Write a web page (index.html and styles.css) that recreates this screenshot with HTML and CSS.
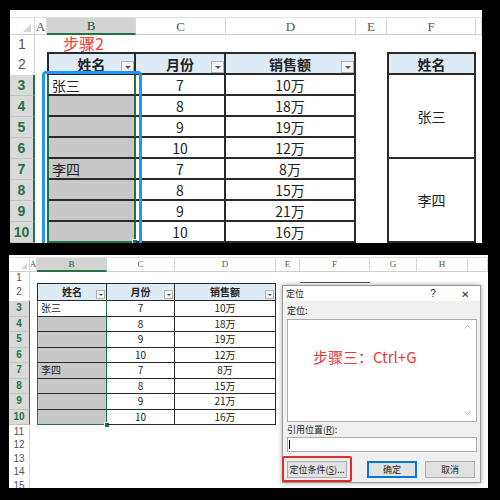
FILE: index.html
```html
<!DOCTYPE html>
<html lang="zh-CN">
<head>
<meta charset="utf-8">
<title>定位</title>
<link rel="stylesheet" href="styles.css">
</head>
<body>
<div class="page">
  <section class="panel top">
    <div class="grid">
      <div class="strip"></div>
      <div class="corner"><i class="tri"></i></div>
      <div class="ch">A</div><div class="ch on">B</div><div class="ch">C</div><div class="ch">D</div><div class="ch">E</div><div class="ch">F</div><div class="ch"></div>

      <div class="rh">1</div><div></div><div class="step"><span>步骤2</span></div>

      <div class="rh">2</div><div></div>
      <div class="th first">姓名<i class="dd"></i></div>
      <div class="th">月份<i class="dd"></i></div>
      <div class="th">销售额<i class="dd"></i></div>
      <div></div>
      <div class="th first">姓名</div>

      <div class="rh on">3</div><div></div><div class="td name sel">张三</div><div class="td">7</div><div class="td">10万</div><div></div><div class="td merge first">张三</div>
      <div class="rh on">4</div><div></div><div class="td name sel gray"></div><div class="td">8</div><div class="td">18万</div>
      <div class="rh on">5</div><div></div><div class="td name sel gray"></div><div class="td">9</div><div class="td">19万</div>
      <div class="rh on">6</div><div></div><div class="td name sel gray"></div><div class="td">10</div><div class="td">12万</div>
      <div class="rh on">7</div><div></div><div class="td name sel gray">李四</div><div class="td">7</div><div class="td">8万</div><div></div><div class="td merge first">李四</div>
      <div class="rh on">8</div><div></div><div class="td name sel gray"></div><div class="td">8</div><div class="td">15万</div>
      <div class="rh on">9</div><div></div><div class="td name sel gray"></div><div class="td">9</div><div class="td">21万</div>
      <div class="rh on">10</div><div></div><div class="td name sel gray last"><i class="fh"></i></div><div class="td">10</div><div class="td">16万</div>
    </div>
    <div class="anno"></div>
  </section>

  <section class="panel bot">
    <div class="grid">
      <div class="strip"></div>
      <div class="corner"><i class="tri"></i></div>
      <div class="ch">A</div><div class="ch on">B</div><div class="ch">C</div><div class="ch">D</div><div class="ch">E</div><div class="ch">F</div><div class="ch">G</div><div class="ch">H</div><div class="ch"></div>

      <div class="rh">1</div><div></div><div></div><div></div><div></div><div></div><div class="mark"></div>

      <div class="rh">2</div><div></div>
      <div class="th first">姓名<i class="dd"></i></div>
      <div class="th">月份<i class="dd"></i></div>
      <div class="th">销售额<i class="dd"></i></div>

      <div class="rh on">3</div><div></div><div class="td name sel">张三</div><div class="td">7</div><div class="td">10万</div>
      <div class="rh on">4</div><div></div><div class="td name sel gray"></div><div class="td">8</div><div class="td">18万</div>
      <div class="rh on">5</div><div></div><div class="td name sel gray"></div><div class="td">9</div><div class="td">19万</div>
      <div class="rh on">6</div><div></div><div class="td name sel gray"></div><div class="td">10</div><div class="td">12万</div>
      <div class="rh on">7</div><div></div><div class="td name sel gray">李四</div><div class="td">7</div><div class="td">8万</div>
      <div class="rh on">8</div><div></div><div class="td name sel gray"></div><div class="td">8</div><div class="td">15万</div>
      <div class="rh on">9</div><div></div><div class="td name sel gray"></div><div class="td">9</div><div class="td">21万</div>
      <div class="rh on">10</div><div></div><div class="td name sel gray last"><i class="fh"></i></div><div class="td">10</div><div class="td">16万</div>
      <div class="rh">11</div>
      <div class="rh">12</div>
      <div class="rh">13</div>
      <div class="rh">14</div>
      <div class="rh">15</div>
    </div>

    <div class="dlg">
      <div class="dlg-title"><span>定位</span><span class="q">?</span><span class="x">✕</span></div>
      <div class="dlg-body">
        <div class="lbl first-lbl">定位:</div>
        <div class="list">
          <span class="red">步骤三：Ctrl+G</span>
          <svg class="up" width="7" height="4" viewBox="0 0 7 4"><path d="M0.5 3.5 L3.5 0.5 L6.5 3.5" fill="none" stroke="#b8b8b8" stroke-width="1"/></svg>
          <svg class="down" width="7" height="4" viewBox="0 0 7 4"><path d="M0.5 0.5 L3.5 3.5 L6.5 0.5" fill="none" stroke="#b8b8b8" stroke-width="1"/></svg>
        </div>
        <div class="lbl">引用位置(<u>R</u>):</div>
        <div class="input"><i class="caret"></i></div>
        <div class="btns">
          <div class="btn special">定位条件(<u>S</u>)...</div>
          <div class="btn ok">确定</div>
          <div class="btn">取消</div>
        </div>
      </div>
    </div>
  </section>
</div>
</body>
</html>
```

FILE: styles.css
```css
* { box-sizing: border-box; margin: 0; padding: 0; }
html, body { width: 500px; height: 500px; background: #000; overflow: hidden; }
body { font-family: "Noto Sans CJK SC", "Noto Sans", sans-serif; color: #222; }

.page { display: flex; flex-direction: column; padding-top: 10px; gap: 12px; }
.panel { position: relative; background: #fff; height: 233px; overflow: hidden; }
.top { margin-left: 10px; width: 472px; --b: 2px; }
.bot { margin-left: 9px; width: 479px; --b: 1px; }

.grid { display: grid; line-height: 1; }
.top .grid {
  grid-template-columns: 25px 12px 89px 90px 130px 31px 89px 6px;
  grid-template-rows: 8px 17px 17px 23px repeat(8, 21px);
}
.bot .grid {
  grid-template-columns: 21px 7px 70px 68px 101px 24px 70px 47px 51px 20px;
  grid-template-rows: 3px 14px 11px 18px repeat(8, 15.5px) repeat(5, 13.5px);
}

.strip { grid-column: 1 / -1; border-bottom: 1px solid #e2e2e2; }
.corner { grid-column: 1; position: relative; border-right: 1px solid #d6d6d6; border-bottom: 1px solid #cfcfcf; }
.tri { position: absolute; right: 3px; bottom: 2px; width: 0; height: 0; border-left: 8px solid transparent; border-bottom: 8px solid #d4d4d4; }
.bot .tri { right: 2px; border-left-width: 6px; border-bottom-width: 6px; }

.ch {
  display: flex; align-items: center; justify-content: center;
  font-family: "Liberation Serif", "DejaVu Serif", serif; color: #555;
  border-right: 1px solid #d6d6d6; border-bottom: 1px solid #cfcfcf;
}
.ch.on { background: #d3d3d3; color: #24583a; border-bottom: 2px solid #217346; }
.top .ch { font-size: 13px; }
.bot .ch { font-size: 9px; }

.rh {
  grid-column: 1; display: flex; align-items: center; justify-content: center;
  color: #555; border-right: 1px solid #d6d6d6;
}
.rh.on { background: #d9d9d9; color: #217346; font-weight: bold; border-right: 2px solid #217346; border-bottom: 1px solid #c2c2c2; }
.top .rh { font-size: 14px; font-family: "Liberation Sans", sans-serif; }
.bot .rh { font-size: 10px; font-family: "Liberation Sans", sans-serif; }
.bot .rh.on { border-right-width: 1px; }

.step { display: flex; align-items: center; padding-left: 16px; color: #e6453c; font-size: 16px; line-height: 1; white-space: nowrap; overflow: visible; }
.step span { display: block; height: 15px; line-height: 15px; }

.th {
  position: relative; display: flex; align-items: center; justify-content: center;
  background: #ddebf7; font-weight: bold;
  border-style: solid; border-color: #2a2a2a; border-width: var(--b) var(--b) var(--b) 0;
}
.td {
  position: relative; display: flex; align-items: center; justify-content: center;
  border-style: solid; border-color: #2a2a2a; border-width: 0 var(--b) var(--b) 0;
}
.first, .name { border-left-width: var(--b); }
.name { justify-content: flex-start; padding-left: 3px; }
.gray { background: #c8c8c8; }
.sel { border-left-color: #217346; border-right-color: #217346; }
.sel.last { border-bottom-color: #217346; }
.merge { grid-row: span 4; }
.top .th, .top .td { font-size: 14px; }
.bot .th, .bot .td { font-size: 10px; }

.dd { position: absolute; right: 0; bottom: 0; width: 13px; height: 12px; border: 1px solid #b3b3b3; background: #f6f6f6; }
.dd::after {
  content: ""; position: absolute; left: 50%; top: 50%; margin: -1px 0 0 -3px;
  border-left: 3px solid transparent; border-right: 3px solid transparent; border-top: 3px solid #555;
}
.bot .dd { right: 1px; bottom: 1px; width: 9px; height: 9px; }
.bot .dd::after { margin: -1px 0 0 -2px; border-left-width: 2px; border-right-width: 2px; border-top-width: 2px; }

.fh { position: absolute; right: -4px; bottom: -4px; width: 6px; height: 6px; background: #217346; border: 1px solid #fff; }
.mark { border-bottom: 1px solid #555; }

.anno { position: absolute; left: 32px; top: 61px; width: 100px; height: 200px; border: 3px solid #2196f3; border-radius: 4px; }

/* dialog */
.dlg {
  position: absolute; left: 273px; top: 30px; width: 199px; height: 198px;
  background: #f0f0f0; border: 1px solid #9a9a9a; box-shadow: 0 0 5px rgba(0,0,0,0.35);
  font-size: 9px; color: #222;
}
.dlg-title { height: 15px; background: #fff; display: flex; align-items: center; padding-left: 3px; }
.q { margin-left: auto; width: 14px; text-align: center; font-family: "Liberation Sans", sans-serif; font-size: 10px; }
.x { width: 14px; margin: 0 8px 0 18px; text-align: center; font-size: 10px; color: #333; }
.dlg-body { padding: 0 3px 0 4px; }
.lbl { height: 15px; display: flex; align-items: center; }
.first-lbl { height: 18px; }
.list { position: relative; height: 103px; background: #fff; border: 1px solid #acacac; padding: 27px 0 0 25px; }
.red { font-size: 15px; line-height: 20px; color: #e23b3b; white-space: nowrap; }
.up { position: absolute; right: 5px; top: 5px; }
.down { position: absolute; right: 5px; bottom: 6px; }
.input { height: 15px; background: #fff; border: 1px solid #acacac; }
.caret { display: block; margin: 2px 0 0 1px; width: 1px; height: 9px; background: #000; }
.btns { display: flex; margin-top: 9px; }
.btn { height: 17px; width: 50px; display: flex; align-items: center; justify-content: center; background: #e1e1e1; border: 1px solid #adadad; white-space: nowrap; }
.special { width: 60px; margin-right: 20px; position: relative; }
.special::after { content: ""; position: absolute; left: -6px; top: -6px; right: -6px; bottom: -5px; border: 2px solid #e12c2c; border-radius: 2px; }
.ok { margin-right: 8px; border-color: #0078d7; box-shadow: inset 0 0 0 1px #0078d7; }
```
